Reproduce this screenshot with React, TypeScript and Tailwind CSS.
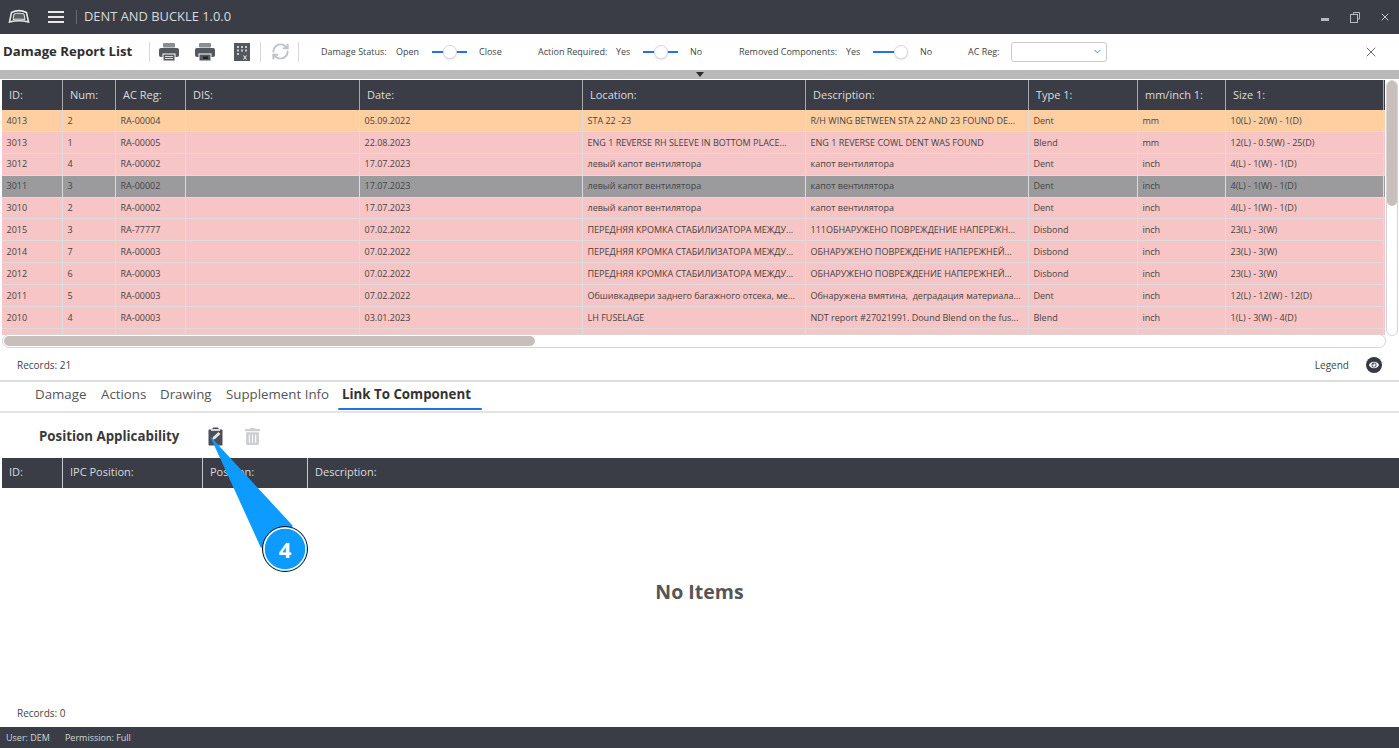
import { ChevronDown, RefreshCw, X } from "lucide-react";
import { FaEye, FaTrashAlt } from "react-icons/fa";

const columns = [
  { label: "ID:", width: "w-[61px]" },
  { label: "Num:", width: "w-[53px]" },
  { label: "AC Reg:", width: "w-[70px]" },
  { label: "DIS:", width: "w-[174px]" },
  { label: "Date:", width: "w-[223px]" },
  { label: "Location:", width: "w-[223px]" },
  { label: "Description:", width: "w-[223px]" },
  { label: "Type 1:", width: "w-[109px]" },
  { label: "mm/inch 1:", width: "w-[88px]" },
  { label: "Size 1:", width: "w-[158px]" },
];

const rows = [
  ["4013", "2", "RA-00004", "", "05.09.2022", "STA 22 -23", "R/H WING BETWEEN STA 22 AND 23 FOUND DE...", "Dent", "mm", "10(L) - 2(W) - 1(D)"],
  ["3013", "1", "RA-00005", "", "22.08.2023", "ENG 1 REVERSE RH SLEEVE IN BOTTOM PLACE...", "ENG 1 REVERSE COWL DENT WAS FOUND", "Blend", "mm", "12(L) - 0.5(W) - 25(D)"],
  ["3012", "4", "RA-00002", "", "17.07.2023", "левый капот вентилятора", "капот вентилятора", "Dent", "inch", "4(L) - 1(W) - 1(D)"],
  ["3011", "3", "RA-00002", "", "17.07.2023", "левый капот вентилятора", "капот вентилятора", "Dent", "inch", "4(L) - 1(W) - 1(D)"],
  ["3010", "2", "RA-00002", "", "17.07.2023", "левый капот вентилятора", "капот вентилятора", "Dent", "inch", "4(L) - 1(W) - 1(D)"],
  ["2015", "3", "RA-77777", "", "07.02.2022", "ПЕРЕДНЯЯ КРОМКА СТАБИЛИЗАТОРА МЕЖДУ...", "111ОБНАРУЖЕНО ПОВРЕЖДЕНИЕ НАПЕРЕЖН...", "Disbond", "inch", "23(L) - 3(W)"],
  ["2014", "7", "RA-00003", "", "07.02.2022", "ПЕРЕДНЯЯ КРОМКА СТАБИЛИЗАТОРА МЕЖДУ...", "ОБНАРУЖЕНО ПОВРЕЖДЕНИЕ НАПЕРЕЖНЕЙ...", "Disbond", "inch", "23(L) - 3(W)"],
  ["2012", "6", "RA-00003", "", "07.02.2022", "ПЕРЕДНЯЯ КРОМКА СТАБИЛИЗАТОРА МЕЖДУ...", "ОБНАРУЖЕНО ПОВРЕЖДЕНИЕ НАПЕРЕЖНЕЙ...", "Disbond", "inch", "23(L) - 3(W)"],
  ["2011", "5", "RA-00003", "", "07.02.2022", "Обшивкадвери заднего багажного отсека, ме...", "Обнаружена вмятина,  деградация материала...", "Dent", "inch", "12(L) - 12(W) - 12(D)"],
  ["2010", "4", "RA-00003", "", "03.01.2023", "LH FUSELAGE", "NDT report #27021991. Dound Blend on the fus...", "Blend", "inch", "1(L) - 3(W) - 4(D)"],
  ["", "", "", "", "", "", "", "", "", ""],
];

const subColumns = [
  { label: "ID:", width: "w-[61px]" },
  { label: "IPC Position:", width: "w-[140px]" },
  { label: "Position:", width: "w-[105px]" },
  { label: "Description:", width: "flex-1" },
];

const tabs = [
  { label: "Damage", width: "w-[66px]" },
  { label: "Actions", width: "w-[59px]" },
  { label: "Drawing", width: "w-[66px]" },
  { label: "Supplement Info", width: "w-[116px]" },
];

const Logo = () => (
  <svg width="22" height="16" viewBox="0 0 22 16" fill="none" stroke="#e8e8e8" strokeWidth="1.6">
    <path d="M3.500 3.500C8 1.300 14 1.300 18.500 3.500L20.500 13C14.500 11.500 7.500 11.500 1.500 13Z" />
    <path d="M6 5C9 4 13 4 16 5L17 10.500C13 10 9 10 5 10.500Z" fill="#e8e8e8" fillOpacity="0.2" strokeWidth="1" />
  </svg>
);

const PrinterIcon = ({ tray }: { tray: "lines" | "bar" }) => (
  <svg width="20" height="18" viewBox="0 0 20 18">
    <rect x="4" y="0" width="12" height="4.500" rx="1" fill="#8b8d92" />
    <rect x="0" y="5" width="20" height="9" rx="2" fill="#54575d" />
    <rect x="3.500" y="10.500" width="13" height="7" fill="#fff" />
    <rect x="4.500" y="11.500" width="11" height="6" fill="#54575d" />
    {tray === "lines" ? (
      <path d="M6 13.500h8M6 15.500h8" stroke="#d9dadb" strokeWidth="1" />
    ) : (
      <rect x="8" y="13.500" width="5" height="2.500" fill="#1f2125" />
    )}
  </svg>
);

const ExcelIcon = () => (
  <svg width="16" height="18" viewBox="0 0 16 18">
    <rect width="16" height="18" fill="#54575d" />
    <path d="M3 3h2v2H3zM7 3h2v2H7zM11 3h2v2h-2zM3 6.500h2v2H3zM7 6.500h2v2H7zM11 6.500h2v2h-2zM3 10h2v2H3z" fill="#c9cacc" />
    <path d="M10 12.500l1 1.500 1-1.500h1l-1.500 2 1.500 2h-1l-1-1.500-1 1.500H9l1.500-2-1.500-2z" fill="#fff" />
  </svg>
);

const ClipboardIcon = () => (
  <svg width="15" height="19" viewBox="0 0 15 19">
    <path d="M1.500 2.500H4.500V1.500C4.500.7 5 .5 5.500.5h4c.6 0 1 .3 1 1v1h3c.6 0 1 .4 1 1v14c0 .6-.4 1-1 1h-12c-.6 0-1-.4-1-1v-14c0-.6.4-1 1-1z" fill="#4b4e55" />
    <rect x="3" y="2" width="9" height="2" fill="#d5d6d8" />
    <path d="M4 13l1-3 5.500-5 2 2-5.500 5z" fill="#e4e5e7" />
  </svg>
);

const Toggle = ({ thumb }: { thumb: string }) => (
  <div className="relative h-[2px] w-[35px] bg-[#2370ee]">
    <span className={`absolute -top-[6px] h-[14px] w-[14px] rounded-full border border-[#d8d8d8] bg-white shadow-sm ${thumb}`} />
  </div>
);

const Divider = ({ className }: { className: string }) => <span className={`h-[20px] w-px bg-[#d8d8d8] ${className}`} />;

export default function App() {
  return (
    <div className="relative flex h-[748px] w-[1399px] flex-col overflow-hidden bg-white font-['Open_Sans',sans-serif] text-[#444]">
      {/* Title bar */}
      <div className="flex h-[34px] shrink-0 items-center bg-[#3a3d46] text-[#d9dade]">
        <div className="ml-[8px] flex w-[40px] items-center">
          <Logo />
        </div>
        <div className="flex w-[16px] flex-col gap-[3px]">
          <span className="h-[2px] bg-[#e8e8e8]" />
          <span className="h-[2px] bg-[#e8e8e8]" />
          <span className="h-[2px] bg-[#e8e8e8]" />
        </div>
        <span className="ml-[12px] h-[14px] w-px bg-[#666971]" />
        <span className="ml-[7px] text-[12.9px]">DENT AND BUCKLE 1.0.0</span>
        <div className="ml-auto mr-[8px] flex items-center">
          <span className="mt-[4px] h-[3px] w-[8px] bg-[#b8b9bd]" />
          <svg className="ml-[21px]" width="10" height="11" viewBox="0 0 10 11" fill="none" stroke="#b8b9bd">
            <path d="M3.500 2.500V.5H9.500V7H7.500" />
            <rect x=".5" y="2.500" width="7" height="8" />
          </svg>
          <X className="ml-[19px]" size={12} strokeWidth={2} color="#c8c9cc" />
        </div>
      </div>

      {/* Toolbar */}
      <div className="flex h-[35px] shrink-0 items-center text-[9px] text-[#444]">
        <span className="ml-[3px] w-[146px] text-[13.2px] font-bold text-[#2e2e2e]">Damage Report List</span>
        <Divider className="" />
        <span className="ml-[9px]">
          <PrinterIcon tray="lines" />
        </span>
        <span className="ml-[16px]">
          <PrinterIcon tray="bar" />
        </span>
        <span className="ml-[19px]">
          <ExcelIcon />
        </span>
        <Divider className="ml-[10px]" />
        <RefreshCw className="ml-[10px]" size={19} color="#c2c3c6" strokeWidth={2.500} />
        <Divider className="ml-[8px]" />
        <span className="ml-[22px] w-[75px]">Damage Status:</span>
        <span className="w-[36px]">Open</span>
        <Toggle thumb="left-[11px]" />
        <span className="ml-[12px] w-[59px]">Close</span>
        <span className="w-[78px]">Action Required:</span>
        <span className="w-[27px]">Yes</span>
        <Toggle thumb="left-[11px]" />
        <span className="ml-[12px] w-[49px]">No</span>
        <span className="w-[107px]">Removed Components:</span>
        <span className="w-[27px]">Yes</span>
        <Toggle thumb="right-0" />
        <span className="ml-[12px] w-[48px]">No</span>
        <span className="w-[43px]">AC Reg:</span>
        <div className="flex h-[20px] w-[96px] items-center justify-end rounded-[3px] border border-[#c9c9c9] pr-[3px]">
          <ChevronDown size={11} color="#3b6fd8" />
        </div>
        <X className="ml-auto mr-[20px]" size={16} strokeWidth={1.300} color="#555" />
      </div>

      {/* Splitter */}
      <div className="mt-[1px] flex h-[9px] shrink-0 items-center justify-center bg-[#b9b9b9]">
        <span className="h-0 w-0 border-x-[4px] border-t-[5px] border-x-transparent border-t-[#2c2c2c]" />
      </div>

      {/* Damage table */}
      <div className="flex h-[270px] shrink-0 pl-[2px] pr-[1px] pt-[1px]">
        <div className="flex w-[1383px] flex-col">
          <div className="flex h-[30px] shrink-0 bg-[#3a3d46] text-[11px] text-[#dcdcdc]">
            {columns.map((c) => (
              <div key={c.label} className={`flex items-center border-r border-[#a9a9ad] pl-[7px] ${c.width}`}>
                {c.label}
              </div>
            ))}
          </div>
          <div className="h-[225px] overflow-hidden">
            {rows.map((row, i) => (
              <div
                key={i}
                className={`flex h-[21.9px] border-b border-[#dcdcdc] text-[9px] ${
                  i === 0 ? "bg-[#ffcfa1]" : i === 3 ? "bg-[#9b9b9e]" : "bg-[#f7c5c5]"
                }`}
              >
                {row.map((cell, j) => (
                  <div
                    key={j}
                    className={`flex items-center overflow-hidden whitespace-pre border-r border-[#dcdcdc] pl-[4.500px] ${columns[j].width}`}
                  >
                    {cell}
                  </div>
                ))}
              </div>
            ))}
          </div>
          <div className="mt-[-1px] h-[14px] w-[1384px] rounded-full border border-[#d5d5d5] bg-white p-px">
            <div className="h-full w-[531px] rounded-full bg-[#c8bfbd]" />
          </div>
        </div>
        <div className="ml-[1px] h-[256px] w-[12px] rounded-[6px] border border-[#d5d5d5] bg-white">
          <div className="h-[125px] rounded-[6px] bg-[#c8bfbd]" />
        </div>
      </div>

      {/* Records and legend */}
      <div className="flex h-[33px] shrink-0 items-center justify-between border-b-2 border-[#dcdcdc] pl-[17px] pr-[17px] pt-[1px] text-[10px]">
        <span>Records: 21</span>
        <div className="flex items-center gap-[17px]">
          <span>Legend</span>
          <span className="flex h-[16px] w-[16px] items-center justify-center rounded-full bg-[#363941]">
            <FaEye size={10} color="#fff" />
          </span>
        </div>
      </div>

      {/* Tabs */}
      <div className="flex h-[31px] shrink-0 items-start border-b-2 border-[#e6e3e3] pl-[35px] text-[13.300px] text-[#555]">
        {tabs.map((t) => (
          <span key={t.label} className={`pt-[3px] ${t.width}`}>
            {t.label}
          </span>
        ))}
        <span className="relative -ml-[4px] h-[28px] pl-[4px] pr-[11px] pt-[3px] font-bold text-[#333]">
          Link To Component
          <span className="absolute bottom-0 left-0 right-0 h-[2px] rounded-full bg-[#2370ee]" />
        </span>
      </div>

      {/* Position applicability */}
      <div className="flex h-[45px] shrink-0 items-center pl-[39px] pt-[2px]">
        <span className="w-[169px] text-[13.300px] font-bold text-[#3a3a3a]">Position Applicability</span>
        <ClipboardIcon />
        <FaTrashAlt className="ml-[21px]" size={17} color="#cdced1" />
      </div>

      <div className="flex h-[30px] shrink-0 pl-[2px] text-[11px] text-[#dcdcdc]">
        <div className="flex w-full bg-[#3a3d46]">
          {subColumns.map((c) => (
            <div
              key={c.label}
              className={`flex items-center pb-[2px] pl-[7px] ${c.width} ${c.width === "flex-1" ? "" : "border-r border-[#c8c8c8]"}`}
            >
              {c.label}
            </div>
          ))}
        </div>
      </div>

      <div className="flex flex-1 flex-col">
        <div className="flex flex-1 items-center justify-center pb-[3px] text-[19.500px] font-bold text-[#555]">No Items</div>
        <div className="h-[28px] pl-[17px] text-[10px] leading-[28px]">Records: 0</div>
      </div>

      {/* Status bar */}
      <div className="flex h-[21px] shrink-0 items-center gap-[15px] bg-[#3a3d46] pl-[6px] text-[9px] text-[#d4d5d8]">
        <span>User: DEM</span>
        <span>Permission: Full</span>
      </div>

      {/* Callout */}
      <svg className="absolute left-[200px] top-[420px]" width="120" height="160" viewBox="200 420 120 160">
        <path d="M210 436L261 548L293 526Z" fill="#0d9bff" />
        <circle cx="285" cy="549" r="22.500" fill="#0d9bff" stroke="#111" strokeWidth="1" />
        <circle cx="285" cy="549" r="21" fill="none" stroke="#fff" strokeWidth="1.500" />
      </svg>
      <span className="absolute left-[263px] top-[535px] flex w-[44px] justify-center text-[22px] font-bold leading-[28px] text-white">4</span>
    </div>
  );
}
